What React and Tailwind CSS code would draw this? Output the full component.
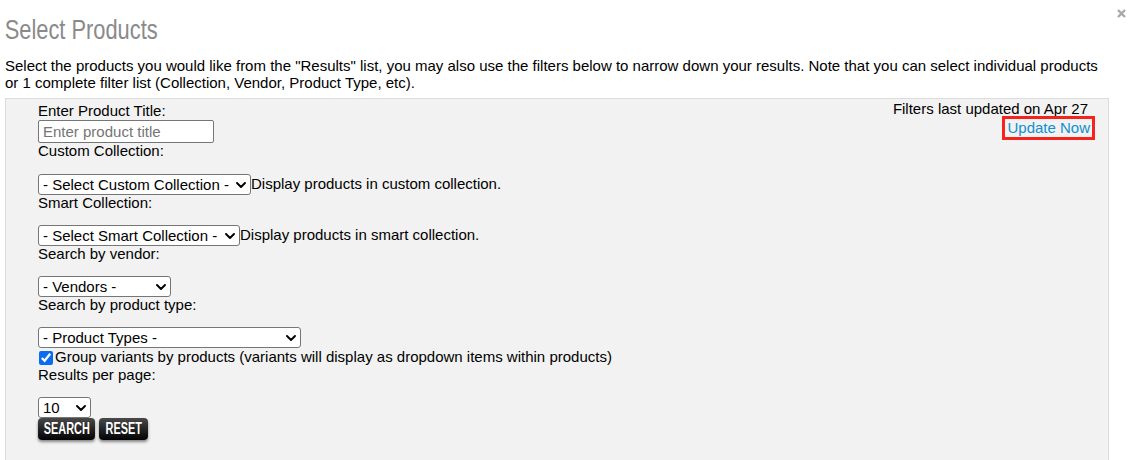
import { useState } from 'react'

const SANS = { fontFamily: '"Liberation Sans", Arial, sans-serif' }

function Chevron() {
  return (
    <svg width="10" height="6" viewBox="0 0 10 6" className="pointer-events-none absolute right-[5px] top-[8px]">
      <path d="M1 1l4 4 4-4" fill="none" stroke="#000" strokeWidth="1.9" strokeLinecap="round" strokeLinejoin="round" />
    </svg>
  )
}

function Picker({ className, options }) {
  return (
    <span className={`relative inline-block h-[21px] ${className}`}>
      <select className="block h-full w-full appearance-none rounded-[3px] border border-[#767676] bg-white pl-[4px] pr-5 text-[15px] leading-[19px] text-black outline-none">
        {options.map(o => <option key={o}>{o}</option>)}
      </select>
      <Chevron />
    </span>
  )
}

function Label({ children }) {
  return <div className="h-4 text-[15px] leading-4 text-black">{children}</div>
}

export default function App() {
  const [title, setTitle] = useState('')
  const [group, setGroup] = useState(true)

  return (
    <div className="min-h-[460px] bg-white text-black" style={SANS}>

      {/* header */}
      <div className="flex items-start justify-between">
        <h1 className="origin-left scale-x-[0.78] pl-[6px] pt-[14px] text-[28px] font-normal leading-[32px] text-[#8a8a8a]">
          Select Products
        </h1>
        <svg width="9" height="9" viewBox="0 0 9 9" className="mr-[6px] mt-[9px]">
          <path d="M1 1l7 7M8 1L1 8" stroke="#a8a8a8" strokeWidth="2.4" />
        </svg>
      </div>

      <p className="ml-[5px] mt-[12px] w-[1104px] text-[15px] leading-[16.5px]">
        Select the products you would like from the "Results" list, you may also use the filters below to narrow down your results. Note that you can select individual products or 1 complete filter list (Collection, Vendor, Product Type, etc).
      </p>

      {/* filters panel */}
      <div className="ml-[5px] mt-[7px] flex w-[1104px] justify-between border border-[#dcdcdc] bg-[#f2f2f2] pb-[30px]">
        <div className="pl-[32px] pt-[4px]">
          <Label>Enter Product Title:</Label>
          <input
            type="text"
            value={title}
            onChange={e => setTitle(e.target.value)}
            placeholder="Enter product title"
            className="mt-[1px] block h-[23px] w-[176px] rounded-[2px] border border-[#767676] bg-white px-[4px] text-[15px] outline-none placeholder:text-[#757575]"
          />

          <Label>Custom Collection:</Label>
          <div className="mt-[15px] flex h-[21px] items-center text-[15px]">
            <Picker className="w-[213px]" options={['- Select Custom Collection -']} />
            <span>Display products in custom collection.</span>
          </div>

          <Label>Smart Collection:</Label>
          <div className="mt-[14px] flex h-[21px] items-center text-[15px]">
            <Picker className="w-[202px]" options={['- Select Smart Collection -']} />
            <span>Display products in smart collection.</span>
          </div>

          <Label>Search by vendor:</Label>
          <div className="mt-[14px] flex h-[21px]">
            <Picker className="w-[133px]" options={['- Vendors -']} />
          </div>

          <Label>Search by product type:</Label>
          <div className="mt-[14px] flex h-[21px]">
            <Picker className="w-[263px]" options={['- Product Types -']} />
          </div>

          <label className="flex h-[19px] items-center text-[15px]">
            <input
              type="checkbox"
              checked={group}
              onChange={e => setGroup(e.target.checked)}
              className="ml-[1px] mr-[2px] h-[14px] w-[14px] accent-[#0a6cf0]"
            />
            Group variants by products (variants will display as dropdown items within products)
          </label>

          <Label>Results per page:</Label>
          <div className="mt-[14px] flex h-[21px]">
            <Picker className="w-[53px]" options={['10', '25', '50']} />
          </div>

          <div className="flex gap-[4px]">
            {[['SEARCH', 'w-[57px]'], ['RESET', 'w-[49px]']].map(([b, w]) => (
              <button
                key={b}
                className={`flex h-[22px] ${w} items-center justify-center rounded-[4px] bg-gradient-to-b from-[#4a4a4a] to-[#050505] text-white shadow-[0_2px_3px_rgba(0,0,0,0.45)]`}
              >
                <span className="inline-block scale-x-[0.68] text-[16px] font-bold leading-[22px]">{b}</span>
              </button>
            ))}
          </div>
        </div>

        <div className="flex flex-col items-end pr-[13px] pt-[2px] text-[15px]">
          <div className="pr-[7px] leading-4">Filters last updated on Apr 27</div>
          <a href="#" className="-mt-[1px] block border-[3px] border-[#f5231b] px-[2px] leading-[18px] text-[#0f8fd0]">
            Update Now
          </a>
        </div>
      </div>
    </div>
  )
}
